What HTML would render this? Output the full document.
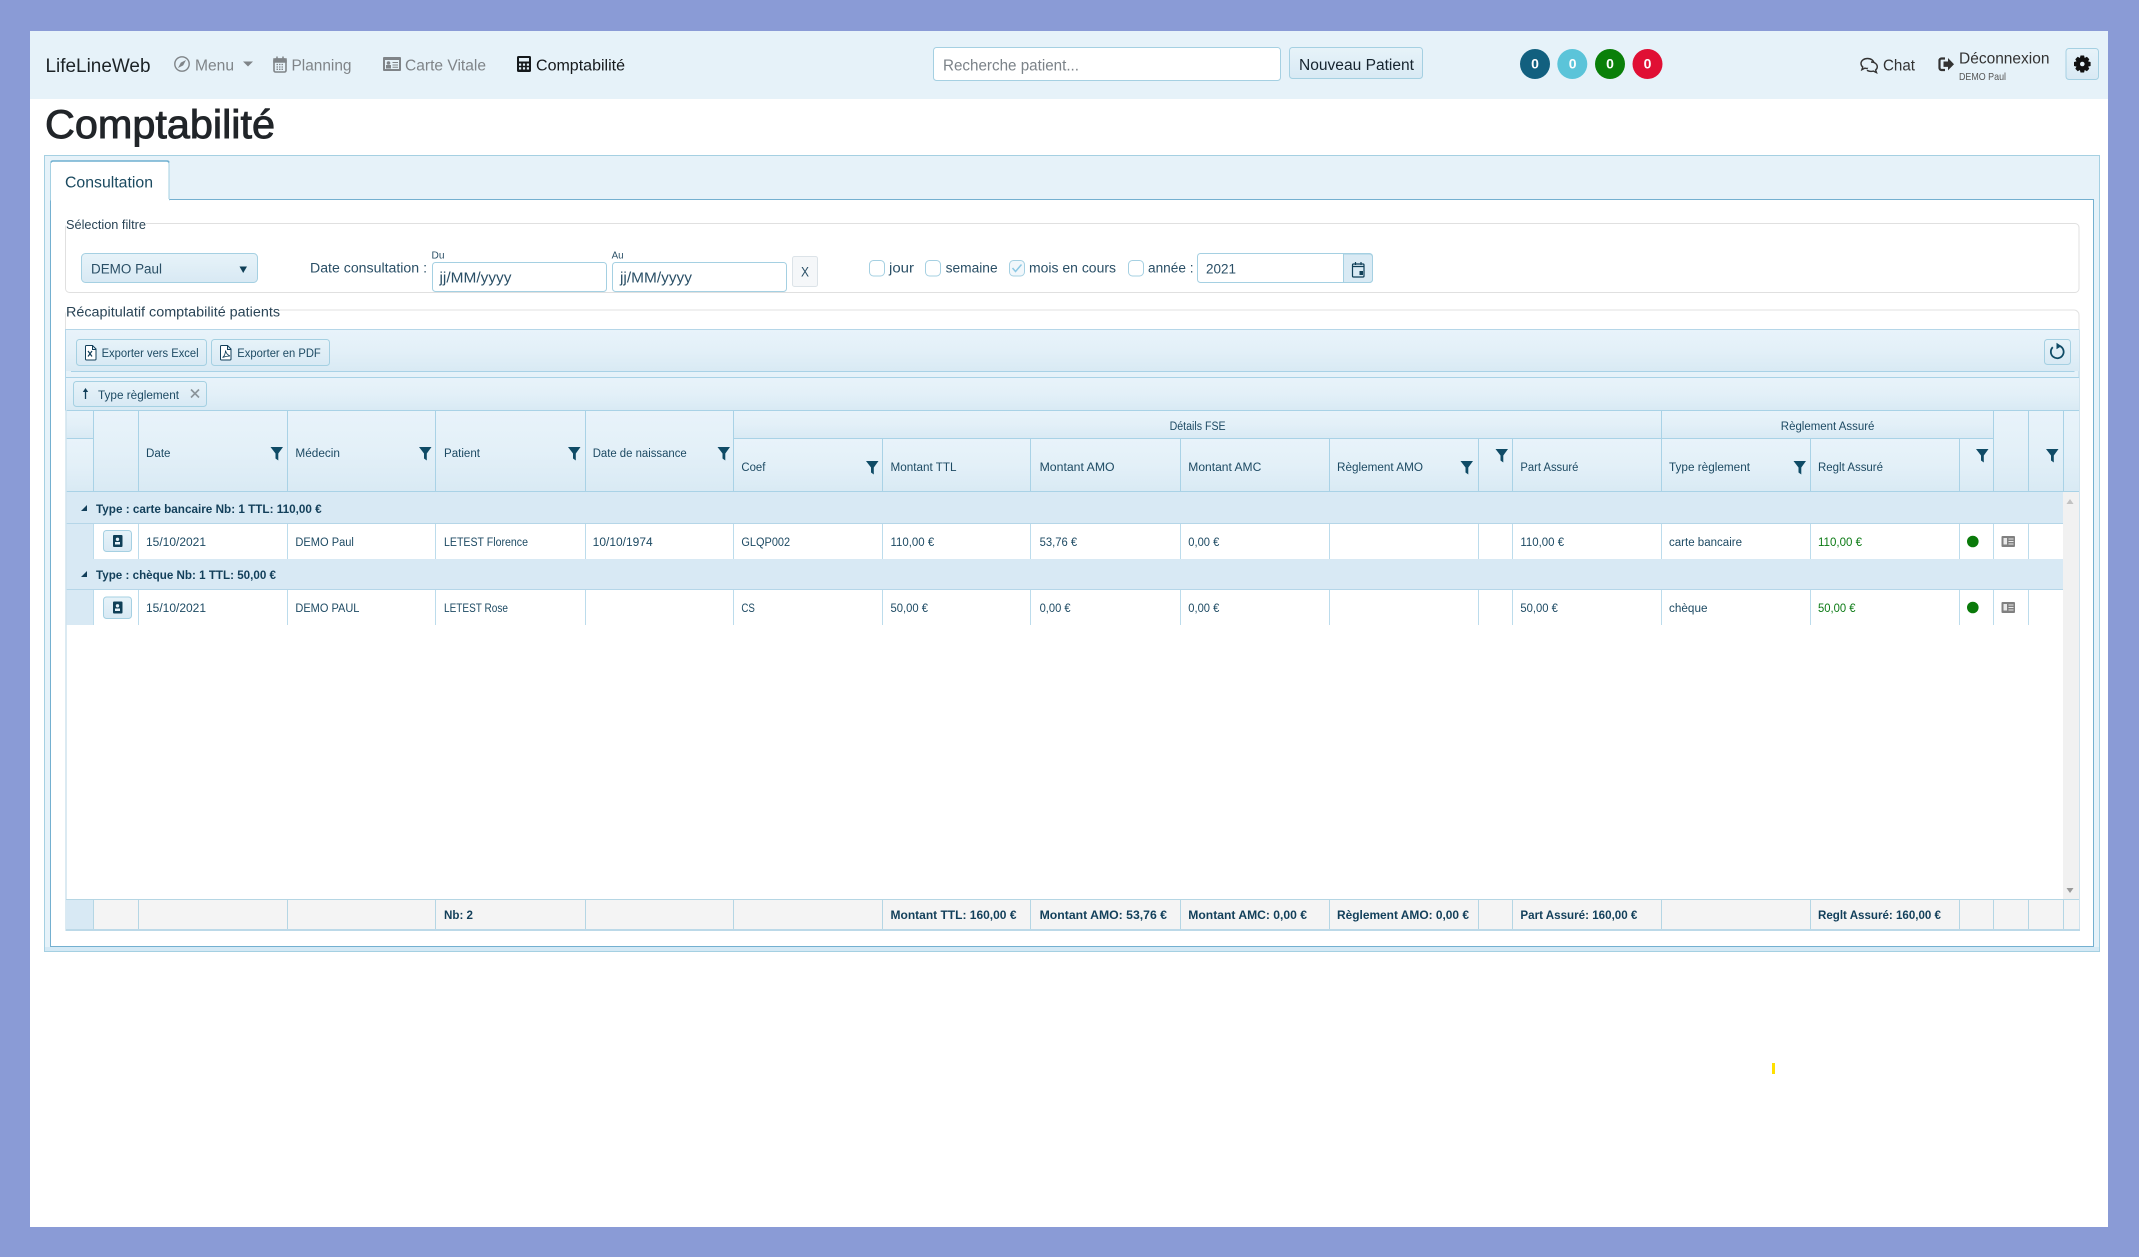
<!DOCTYPE html>
<html lang="fr"><head><meta charset="utf-8"><title>LifeLineWeb - Comptabilité</title>
<style>
html,body{margin:0;padding:0;width:2139px;height:1257px;overflow:hidden;background:#8a9bd6}
svg{display:block;font-family:"Liberation Sans",sans-serif}
.c{font-size:11.5px;fill:#1d4a63}
.b{font-size:11.5px;fill:#123f5a;font-weight:bold}
.n{font-size:15.5px;fill:#7f8488}
.f{font-size:13.5px;fill:#2a4f66}
</style></head><body>
<svg xmlns="http://www.w3.org/2000/svg" width="2139" height="1257" viewBox="0 0 2139 1257">
<defs>
<linearGradient id="g" x1="0" y1="0" x2="0" y2="1"><stop offset="0" stop-color="#e7f3f9"/><stop offset="1" stop-color="#d8e9f4"/></linearGradient>
<linearGradient id="h" x1="0" y1="0" x2="0" y2="1"><stop offset="0" stop-color="#e8f3fa"/><stop offset=".5" stop-color="#e3f0f8"/><stop offset="1" stop-color="#d9eaf4"/></linearGradient>
<path id="fl" d="M0 0H12.5L7.8 6.5V13.5L5 11.5V6.5Z" fill="#0f4b66"/>
</defs>
<rect width="2139" height="1257" fill="#8a9bd6"/>
<rect x="30" y="31" width="2078" height="1196" fill="#fff"/>

<!-- navbar -->
<rect x="30" y="31" width="2078" height="68" fill="#e6f2f9"/>
<text x="45.5" y="72" font-size="19.5" fill="#1c2326" textLength="105" lengthAdjust="spacingAndGlyphs">LifeLineWeb</text>
<g fill="none" stroke="#7f8488" stroke-width="1.4"><circle cx="182" cy="64" r="7.2"/></g>
<path d="M186 60L183.2 65.4L178 68L180.8 62.6Z" fill="#7f8488"/>
<text class="n" x="195" y="70.7" textLength="39" lengthAdjust="spacingAndGlyphs">Menu</text>
<path d="M243 61.5H253L248 66.5Z" fill="#7f8488"/>
<rect x="274" y="59" width="12" height="13" rx="1.5" fill="none" stroke="#7f8488" stroke-width="1.6"/>
<path d="M274 59h12v3h-12zM277 56.5v3M283 56.5v3" fill="#7f8488" stroke="#7f8488" stroke-width="1.5"/>
<path d="M276.5 64.5h7M276.5 67h7M276.5 69.3h7" stroke="#7f8488" stroke-width="1.3" stroke-dasharray="1.5 1"/>
<text class="n" x="291.5" y="70.7" textLength="60" lengthAdjust="spacingAndGlyphs">Planning</text>
<rect x="383" y="57" width="18" height="14" rx="1" fill="#7f8488"/>
<rect x="385" y="60" width="14" height="9" fill="#e6f2f9"/>
<circle cx="388.5" cy="63" r="1.8" fill="#7f8488"/><rect x="386" y="65" width="5" height="3.5" fill="#7f8488"/>
<path d="M392.5 62.5h5.5M392.5 65h5.5M392.5 67.3h5.5" stroke="#7f8488" stroke-width="1"/>
<text class="n" x="405" y="70.7" textLength="81" lengthAdjust="spacingAndGlyphs">Carte Vitale</text>
<rect x="517" y="56" width="14" height="16" rx="1.5" fill="#15191c"/>
<rect x="519" y="58" width="10" height="3.5" fill="#e6f2f9"/>
<path d="M519 63.5h2.2v2.2h-2.2zM522.9 63.5h2.2v2.2h-2.2zM526.8 63.5h2.2v2.2h-2.2zM519 67.3h2.2v2.2h-2.2zM522.9 67.3h2.2v2.2h-2.2zM526.8 67.3h2.2v2.2h-2.2z" fill="#e6f2f9"/>
<text x="536" y="70.7" font-size="15.5" fill="#15191c" textLength="89" lengthAdjust="spacingAndGlyphs">Comptabilité</text>

<rect x="933.5" y="47.5" width="347" height="33" rx="3" fill="#fff" stroke="#a5d0e2"/>
<text x="943" y="70.7" font-size="15.5" fill="#7b8288" textLength="136" lengthAdjust="spacingAndGlyphs">Recherche patient...</text>
<rect x="1289.5" y="47.5" width="133" height="31" rx="3" fill="url(#g)" stroke="#a5d0e2"/>
<text x="1299" y="70" font-size="15.5" fill="#16242f" textLength="115" lengthAdjust="spacingAndGlyphs">Nouveau Patient</text>

<circle cx="1535" cy="64" r="15" fill="#12607f"/><circle cx="1572.3" cy="64" r="15" fill="#5bc4d9"/><circle cx="1610" cy="64" r="15" fill="#0a8009"/><circle cx="1647.5" cy="64" r="15" fill="#e00f34"/>
<g font-size="14" font-weight="bold" fill="#fff" text-anchor="middle"><text x="1535" y="68.5">0</text><text x="1572.7" y="68.5">0</text><text x="1610" y="68.5">0</text><text x="1647.5" y="68.5">0</text></g>

<g fill="#e6f2f9" stroke="#333" stroke-width="1.4"><path d="M1867.5 58.5c3.7 0 6.5 2.2 6.5 5s-2.8 5-6.5 5c-.9 0-1.8-.1-2.6-.4l-3 1.6.9-2.7c-1.2-.9-1.8-2.1-1.8-3.500 0-2.800 2.800-5 6.500-5z"/><path d="M1871 62c3.6 0 6.3 2.1 6.3 4.7 0 1.3-.7 2.5-1.7 3.3l.9 2.6-3-1.5c-.8.2-1.6.3-2.5.3-1.5 0-3-.4-4-1.2"/></g>
<text x="1883" y="70.7" font-size="15.5" fill="#333" textLength="32" lengthAdjust="spacingAndGlyphs">Chat</text>
<path d="M1945 58.5h-3.5a2 2 0 0 0-2 2v7.5a2 2 0 0 0 2 2h3.5" fill="none" stroke="#333" stroke-width="2.2"/>
<path d="M1943.5 61.5h4.5v-3.5l6 6.2-6 6.2v-3.5h-4.5z" fill="#333"/>
<text x="1959" y="63.5" font-size="15.5" fill="#333" textLength="90.5" lengthAdjust="spacingAndGlyphs">Déconnexion</text>
<text x="1959" y="80" font-size="10.5" fill="#555" textLength="47" lengthAdjust="spacingAndGlyphs">DEMO Paul</text>
<rect x="2066" y="48.5" width="32.5" height="31" rx="3" fill="url(#g)" stroke="#a5d0e2"/>
<g transform="translate(2082.3 64)"><path d="M-1.800-8.500H1.800L2.400-6 4.600-7.200 7-4.800 5.800-2.600 8.300-2V2L5.800 2.600 7 4.800 4.600 7.200 2.400 6 1.800 8.500H-1.800L-2.400 6-4.600 7.200-7 4.800-5.800 2.600-8.300 2V-2L-5.800-2.600-7-4.800-4.600-7.200-2.400-6Z" fill="#111"/><circle r="2.300" fill="#e6f2f9"/></g>

<!-- h1 -->
<text x="45" y="138" font-size="40" fill="#212529" stroke="#212529" stroke-width=".9" textLength="230" lengthAdjust="spacingAndGlyphs">Comptabilité</text>

<!-- panel -->
<rect x="44.5" y="155.5" width="2055" height="796" fill="#e6f2f9" stroke="#a5d0e2"/>
<rect x="45" y="947" width="2054" height="4" fill="#d4e9f5"/>
<rect x="50.5" y="199.5" width="2043" height="747" fill="#fff" stroke="#74b0d0"/>
<path d="M50.5 200V164a3 3 0 0 1 3-3H166a3 3 0 0 1 3 3V200Z" fill="#fff" stroke="#a5d0e2"/>
<path d="M51 162.500a2 2 0 0 1 2-1.500H167a2 2 0 0 1 2 1.500" fill="none" stroke="#6fafd0" stroke-width="1.500"/>
<text x="65" y="187.500" font-size="15.500" fill="#1b4a60" textLength="88" lengthAdjust="spacingAndGlyphs">Consultation</text>
<rect x="51" y="199" width="118" height="2" fill="#fff"/>

<!-- filter fieldset -->
<rect x="65.5" y="223.5" width="2013.5" height="69" rx="4" fill="#fff" stroke="#e0e0e0"/>
<rect x="66" y="218" width="80" height="10" fill="#fff"/>
<text x="66" y="229" font-size="12.5" fill="#2a4456" textLength="80" lengthAdjust="spacingAndGlyphs">Sélection filtre</text>
<rect x="81.5" y="253.5" width="176" height="29" rx="4" fill="url(#g)" stroke="#a5d0e2"/>
<text class="f" x="91" y="273.3" textLength="71" lengthAdjust="spacingAndGlyphs">DEMO Paul</text>
<path d="M239.5 266.5H247L243.2 273Z" fill="#0f3f57"/>
<text class="f" x="310" y="272.5" textLength="117" lengthAdjust="spacingAndGlyphs">Date consultation :</text>
<text x="431.5" y="258.5" font-size="10.5" fill="#2a4f66" textLength="13" lengthAdjust="spacingAndGlyphs">Du</text>
<text x="611.6" y="258.5" font-size="10.5" fill="#2a4f66" textLength="12" lengthAdjust="spacingAndGlyphs">Au</text>
<rect x="432.5" y="262.5" width="174" height="29" rx="3" fill="#fff" stroke="#a5d0e2"/>
<rect x="612.5" y="262.5" width="174" height="29" rx="3" fill="#fff" stroke="#a5d0e2"/>
<text x="439.5" y="282.7" font-size="14.5" fill="#2a4f66" textLength="72" lengthAdjust="spacingAndGlyphs">jj/MM/yyyy</text>
<text x="620" y="282.7" font-size="14.5" fill="#2a4f66" textLength="72" lengthAdjust="spacingAndGlyphs">jj/MM/yyyy</text>
<rect x="792.5" y="256.5" width="25" height="30" rx="2" fill="#f5f7f9" stroke="#dce3e8"/>
<text class="f" x="801" y="276.7" textLength="8" lengthAdjust="spacingAndGlyphs">X</text>
<g fill="#fff" stroke="#a5d0e2"><rect x="869.5" y="260.5" width="15" height="15.5" rx="4"/><rect x="925.5" y="260.5" width="15" height="15.5" rx="4"/><rect x="1009.5" y="260.5" width="15" height="15.5" rx="4" fill="#f1f7fb"/><rect x="1128.5" y="260.5" width="15" height="15.5" rx="4"/></g>
<path d="M1012.5 268l3 3.5 6-7" fill="none" stroke="#8cc8e4" stroke-width="1.5"/>
<text class="f" x="889" y="272.3" textLength="25" lengthAdjust="spacingAndGlyphs">jour</text>
<text class="f" x="945.6" y="272.3" textLength="52" lengthAdjust="spacingAndGlyphs">semaine</text>
<text class="f" x="1029" y="272.3" textLength="87" lengthAdjust="spacingAndGlyphs">mois en cours</text>
<text class="f" x="1148" y="272.3" textLength="45.5" lengthAdjust="spacingAndGlyphs">année :</text>
<rect x="1197.5" y="253.5" width="175" height="29" rx="3" fill="#fff" stroke="#a5d0e2"/>
<path d="M1343.5 254H1369.5a3 3 0 0 1 3 3V279.5a3 3 0 0 1-3 3H1343.5Z" fill="#d9eaf4" stroke="#a5d0e2"/>
<text class="f" x="1206" y="273.3" textLength="30" lengthAdjust="spacingAndGlyphs">2021</text>
<rect x="1352.5" y="264" width="11.500" height="13" rx="1" fill="none" stroke="#0f3f57" stroke-width="1.200"/>
<path d="M1352.500 266.500h11.500M1355.500 262v3M1361 262v3" stroke="#0f3f57" stroke-width="1.200"/><rect x="1359.500" y="271" width="3.500" height="4" fill="#0f3f57"/>

<!-- recap fieldset -->
<path d="M65.5 330V315a5 5 0 0 1 5-5H2074a5 5 0 0 1 5 5V330" fill="none" stroke="#e2e2e2"/>
<rect x="66" y="305" width="214" height="10" fill="#fff"/>
<text x="66" y="316.7" font-size="13.5" fill="#2a4456" textLength="214" lengthAdjust="spacingAndGlyphs">Récapitulatif comptabilité patients</text>

<!-- toolbar -->
<rect x="65.5" y="329.5" width="2013.5" height="81" fill="#e6f2f9" stroke="#b5d6e8"/>
<rect x="66" y="330" width="2013" height="41" fill="url(#h)"/>
<rect x="66" y="378" width="2013" height="32" fill="url(#h)"/>
<path d="M71 371.500H2074.500" stroke="#a9d2e6"/><path d="M66 377.500H2079M66 410.500H2079" stroke="#a9d2e6"/>
<rect x="76.500" y="339.500" width="130" height="26" rx="3" fill="url(#g)" stroke="#a5d0e2"/>
<rect x="211.500" y="339.500" width="118" height="26" rx="3" fill="url(#g)" stroke="#a5d0e2"/>
<path d="M85.500 346.500a1 1 0 0 1 1-1h6l3.500 3.500v10a1 1 0 0 1-1 1h-8.500a1 1 0 0 1-1-1zM92.500 345.500v4h3.500" fill="#fff" stroke="#123f5a" stroke-width="1"/>
<path d="M88 351l4 5.500M92 351l-4 5.500" stroke="#123f5a" stroke-width="1.200"/>
<path d="M220.500 346.500a1 1 0 0 1 1-1h6l3.500 3.500v10a1 1 0 0 1-1 1h-8.500a1 1 0 0 1-1-1zM227.500 345.500v4h3.500" fill="#fff" stroke="#123f5a" stroke-width="1"/>
<path d="M222.500 357.500c2-1 3-4.500 3-7 .5 2.500 2 4.500 4.500 5.500-2.500 0-5 .5-7.500 1.500z" fill="none" stroke="#123f5a" stroke-width=".8"/>
<text class="c" x="101.600" y="357" textLength="97" lengthAdjust="spacingAndGlyphs">Exporter vers Excel</text>
<text class="c" x="237.300" y="357" textLength="83.500" lengthAdjust="spacingAndGlyphs">Exporter en PDF</text>
<rect x="2044.500" y="339.500" width="26" height="25" rx="3" fill="url(#g)" stroke="#a5d0e2"/>
<path d="M2052.800 347.200a6.400 6.400 0 1 0 6.900-1.300" fill="none" stroke="#0f4b66" stroke-width="1.800"/><path d="M2056.500 342.800l5 3.300-5 3.200z" fill="#0f4b66"/>
<rect x="73.500" y="381.500" width="133" height="25" rx="3" fill="url(#g)" stroke="#a5d0e2"/>
<path d="M85.500 399v-9" stroke="#123f5a" stroke-width="1.300"/><path d="M82.800 392l2.700-4 2.700 4z" fill="#123f5a"/>
<text class="c" x="98" y="399" textLength="81" lengthAdjust="spacingAndGlyphs">Type règlement</text>
<path d="M191 389.500l8 8M199 389.500l-8 8" stroke="#8a949a" stroke-width="1.600"/>

<!-- grid header -->
<g fill="url(#h)">
<rect x="66" y="411" width="27" height="27"/><rect x="66" y="439" width="27" height="52"/>
<rect x="94" y="411" width="44" height="80"/><rect x="139" y="411" width="148" height="80"/><rect x="288" y="411" width="147" height="80"/><rect x="436" y="411" width="149" height="80"/><rect x="586" y="411" width="147" height="80"/>
<rect x="734" y="411" width="927" height="27"/><rect x="1662" y="411" width="331" height="27"/>
<rect x="734" y="439" width="148" height="52"/><rect x="883" y="439" width="147" height="52"/><rect x="1031" y="439" width="149" height="52"/><rect x="1181" y="439" width="148" height="52"/><rect x="1330" y="439" width="148" height="52"/><rect x="1479" y="439" width="33" height="52"/><rect x="1513" y="439" width="148" height="52"/><rect x="1662" y="439" width="148" height="52"/><rect x="1811" y="439" width="148" height="52"/><rect x="1960" y="439" width="33" height="52"/>
<rect x="1994" y="411" width="34" height="80"/><rect x="2029" y="411" width="34" height="80"/><rect x="2064" y="411" width="15" height="80"/>
</g>
<path d="M93.500 410V491M138.500 410V491M287.500 410V491M435.500 410V491M585.500 410V491M733.500 410V491M1661.500 410V491M1993.500 410V491M2028.500 410V491M2063.500 410V491M882.500 438V491M1030.500 438V491M1180.500 438V491M1329.500 438V491M1478.500 438V491M1512.500 438V491M1810.500 438V491M1959.500 438V491M66 438.500H93M734 438.500H1993M66 491.500H2079" fill="none" stroke="#a9d2e6"/>
<text class="c" x="146" y="457" textLength="24.500" lengthAdjust="spacingAndGlyphs">Date</text>
<text class="c" x="295.400" y="457" textLength="44.600" lengthAdjust="spacingAndGlyphs">Médecin</text>
<text class="c" x="444" y="457" textLength="36" lengthAdjust="spacingAndGlyphs">Patient</text>
<text class="c" x="592.700" y="457" textLength="94" lengthAdjust="spacingAndGlyphs">Date de naissance</text>
<text class="c" x="1169.600" y="430" textLength="56" lengthAdjust="spacingAndGlyphs">Détails FSE</text>
<text class="c" x="1780.800" y="430" textLength="93.600" lengthAdjust="spacingAndGlyphs">Règlement Assuré</text>
<text class="c" x="741.400" y="471" textLength="24" lengthAdjust="spacingAndGlyphs">Coef</text>
<text class="c" x="890.500" y="471" textLength="66" lengthAdjust="spacingAndGlyphs">Montant TTL</text>
<text class="c" x="1039.600" y="471" textLength="75" lengthAdjust="spacingAndGlyphs">Montant AMO</text>
<text class="c" x="1188.300" y="471" textLength="73" lengthAdjust="spacingAndGlyphs">Montant AMC</text>
<text class="c" x="1337" y="471" textLength="86" lengthAdjust="spacingAndGlyphs">Règlement AMO</text>
<text class="c" x="1520.400" y="471" textLength="58" lengthAdjust="spacingAndGlyphs">Part Assuré</text>
<text class="c" x="1669" y="471" textLength="81" lengthAdjust="spacingAndGlyphs">Type règlement</text>
<text class="c" x="1818" y="471" textLength="65" lengthAdjust="spacingAndGlyphs">Reglt Assuré</text>
<use href="#fl" x="270.500" y="447"/><use href="#fl" x="419" y="447"/><use href="#fl" x="568" y="447"/><use href="#fl" x="717.500" y="447"/>
<use href="#fl" x="866" y="461"/><use href="#fl" x="1460.500" y="461"/><use href="#fl" x="1495.500" y="449"/><use href="#fl" x="1793.500" y="461"/><use href="#fl" x="1976" y="449"/><use href="#fl" x="2046" y="449"/>

<!-- body -->
<rect x="2063" y="492" width="16" height="407" fill="#f1f1f1"/>
<path d="M2066.500 504l3.500-5 3.500 5z" fill="#c2c2c2"/><path d="M2066.500 888l3.500 5 3.500-5z" fill="#9a9a9a"/>
<rect x="66" y="492" width="1997" height="133" fill="#d8e9f4"/>
<rect x="94" y="524" width="1969" height="35" fill="#fff"/><rect x="94" y="590" width="1969" height="35" fill="#fff"/>
<path d="M66 523.500H2063M66 589.500H2063" stroke="#b5d6e8"/>
<path d="M93.500 524V559M138.500 524V559M287.500 524V559M435.500 524V559M585.500 524V559M733.500 524V559M882.500 524V559M1030.500 524V559M1180.500 524V559M1329.500 524V559M1478.500 524V559M1512.500 524V559M1661.500 524V559M1810.500 524V559M1959.500 524V559M1993.500 524V559M2028.500 524V559M93.500 590V625M138.500 590V625M287.500 590V625M435.500 590V625M585.500 590V625M733.500 590V625M882.500 590V625M1030.500 590V625M1180.500 590V625M1329.500 590V625M1478.500 590V625M1512.500 590V625M1661.500 590V625M1810.500 590V625M1959.500 590V625M1993.500 590V625M2028.500 590V625" stroke="#bcdcec"/>
<path d="M81 511H87V505Z" fill="#123f5a"/><path d="M81 577H87V571Z" fill="#123f5a"/>
<text class="b" x="96" y="513" textLength="225.700" lengthAdjust="spacingAndGlyphs">Type : carte bancaire Nb: 1 TTL: 110,00 €</text>
<text class="b" x="96" y="579" textLength="180" lengthAdjust="spacingAndGlyphs">Type : chèque Nb: 1 TTL: 50,00 €</text>

<g><rect x="103.500" y="530.500" width="28" height="21" rx="3" fill="url(#g)" stroke="#a5d0e2"/><rect x="113" y="535" width="9.500" height="12" rx="1" fill="#0f3f57"/><circle cx="117.500" cy="539.300" r="1.700" fill="#e6f2f9"/><rect x="115" y="542" width="5" height="2.500" fill="#e6f2f9"/></g>
<g><rect x="103.500" y="597" width="28" height="21.500" rx="3" fill="url(#g)" stroke="#a5d0e2"/><rect x="113" y="601.500" width="9.500" height="12" rx="1" fill="#0f3f57"/><circle cx="117.500" cy="605.800" r="1.700" fill="#e6f2f9"/><rect x="115" y="608.500" width="5" height="2.500" fill="#e6f2f9"/></g>

<text class="c" x="146" y="546" textLength="60" lengthAdjust="spacingAndGlyphs">15/10/2021</text>
<text class="c" x="295.400" y="546" textLength="58.500" lengthAdjust="spacingAndGlyphs">DEMO Paul</text>
<text class="c" x="444" y="546" textLength="84" lengthAdjust="spacingAndGlyphs">LETEST Florence</text>
<text class="c" x="592.700" y="546" textLength="60" lengthAdjust="spacingAndGlyphs">10/10/1974</text>
<text class="c" x="741.400" y="546" textLength="48.700" lengthAdjust="spacingAndGlyphs">GLQP002</text>
<text class="c" x="890.500" y="546" textLength="43.700" lengthAdjust="spacingAndGlyphs">110,00 €</text>
<text class="c" x="1039.600" y="546" textLength="37.500" lengthAdjust="spacingAndGlyphs">53,76 €</text>
<text class="c" x="1188.300" y="546" textLength="31" lengthAdjust="spacingAndGlyphs">0,00 €</text>
<text class="c" x="1520.400" y="546" textLength="43.700" lengthAdjust="spacingAndGlyphs">110,00 €</text>
<text class="c" x="1669" y="546" textLength="73" lengthAdjust="spacingAndGlyphs">carte bancaire</text>
<text x="1818" y="546" font-size="11.500" fill="#0b7a14" textLength="44" lengthAdjust="spacingAndGlyphs">110,00 €</text>
<circle cx="1972.800" cy="541.500" r="5.800" fill="#0a7a0a"/>
<rect x="2001.500" y="536" width="13.500" height="11" rx="1" fill="#808080"/><rect x="2003.500" y="538" width="3.500" height="6.500" fill="#e9e9e9"/><path d="M2008.500 539h5M2008.500 541.500h5M2008.500 544h5" stroke="#e9e9e9"/>

<text class="c" x="146" y="612" textLength="60" lengthAdjust="spacingAndGlyphs">15/10/2021</text>
<text class="c" x="295.400" y="612" textLength="64" lengthAdjust="spacingAndGlyphs">DEMO PAUL</text>
<text class="c" x="444" y="612" textLength="64" lengthAdjust="spacingAndGlyphs">LETEST Rose</text>
<text class="c" x="741.400" y="612" textLength="13.500" lengthAdjust="spacingAndGlyphs">CS</text>
<text class="c" x="890.500" y="612" textLength="37.500" lengthAdjust="spacingAndGlyphs">50,00 €</text>
<text class="c" x="1039.600" y="612" textLength="31" lengthAdjust="spacingAndGlyphs">0,00 €</text>
<text class="c" x="1188.300" y="612" textLength="31" lengthAdjust="spacingAndGlyphs">0,00 €</text>
<text class="c" x="1520.400" y="612" textLength="37.500" lengthAdjust="spacingAndGlyphs">50,00 €</text>
<text class="c" x="1669" y="612" textLength="38.500" lengthAdjust="spacingAndGlyphs">chèque</text>
<text x="1818" y="612" font-size="11.500" fill="#0b7a14" textLength="37.500" lengthAdjust="spacingAndGlyphs">50,00 €</text>
<circle cx="1972.800" cy="607.500" r="5.800" fill="#0a7a0a"/>
<rect x="2001.500" y="602" width="13.500" height="11" rx="1" fill="#808080"/><rect x="2003.500" y="604" width="3.500" height="6.500" fill="#e9e9e9"/><path d="M2008.500 605h5M2008.500 607.500h5M2008.500 610h5" stroke="#e9e9e9"/>

<!-- grid sides -->
<path d="M66 410V931" stroke="#cfe3ee" stroke-width="1.500"/><path d="M2079.500 330V931" stroke="#cfe3ee"/>

<!-- footer -->
<rect x="66" y="899" width="2013" height="30" fill="#f4f4f4"/>
<rect x="66" y="899" width="27" height="30" fill="#d8e9f4"/>
<rect x="66" y="929" width="2014" height="2" fill="#bcd9e8"/>
<path d="M66 899.500H2079" stroke="#b5d6e4"/>
<path d="M93.500 899V929M138.500 899V929M287.500 899V929M435.500 899V929M585.500 899V929M733.500 899V929M882.500 899V929M1030.500 899V929M1180.500 899V929M1329.500 899V929M1478.500 899V929M1512.500 899V929M1661.500 899V929M1810.500 899V929M1959.500 899V929M1993.500 899V929M2028.500 899V929M2063.500 899V929" stroke="#b5d6e4"/>
<text class="b" x="444" y="919" textLength="29" lengthAdjust="spacingAndGlyphs">Nb: 2</text>
<text class="b" x="890.500" y="919" textLength="126" lengthAdjust="spacingAndGlyphs">Montant TTL: 160,00 €</text>
<text class="b" x="1039.600" y="919" textLength="127.400" lengthAdjust="spacingAndGlyphs">Montant AMO: 53,76 €</text>
<text class="b" x="1188.300" y="919" textLength="118.700" lengthAdjust="spacingAndGlyphs">Montant AMC: 0,00 €</text>
<text class="b" x="1337" y="919" textLength="132" lengthAdjust="spacingAndGlyphs">Règlement AMO: 0,00 €</text>
<text class="b" x="1520.400" y="919" textLength="117" lengthAdjust="spacingAndGlyphs">Part Assuré: 160,00 €</text>
<text class="b" x="1818" y="919" textLength="123" lengthAdjust="spacingAndGlyphs">Reglt Assuré: 160,00 €</text>

<rect x="1772" y="1063" width="3" height="11" fill="#ffe000"/>
</svg>
</body></html>
